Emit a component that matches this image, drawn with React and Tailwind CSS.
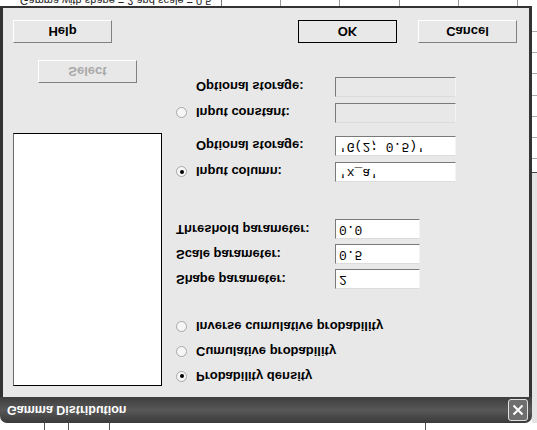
import React from "react";

const label = "text-[13px] font-bold text-black leading-none whitespace-nowrap";
const raised =
  "flex items-center justify-center bg-[#e8e8e8] border border-t-[#808080] border-r-[#808080] border-b-white border-l-white";
const sunken =
  "h-[20px] border border-b-[#7a7a7a] border-l-[#7a7a7a] border-t-[#dcdcdc] border-r-[#f4f4f4] flex items-center pl-[3px] font-['Liberation_Mono','Courier_New',monospace] text-[13px] text-black";

function Radio({ checked }) {
  return (
    <span className="flex h-[11px] w-[11px] shrink-0 items-center justify-center rounded-full border border-[#a8a8a8] bg-[#f6f6f6]">
      {checked && <span className="h-[4px] w-[4px] rounded-full bg-black" />}
    </span>
  );
}

function Field({ width, value, disabled }) {
  return (
    <div className={`${sunken} ${width} ${disabled ? "bg-[#e8e8e8]" : "bg-white"}`}>
      {value}
    </div>
  );
}

function RadioRow({ checked, text, h = "h-[25px]", children }) {
  return (
    <div className={`flex items-center ${h}`}>
      <Radio checked={checked} />
      <span className={`${label} ml-[9px] w-[139px]`}>{text}</span>
      {children}
    </div>
  );
}

function StorageRow({ value, disabled }) {
  return (
    <div className="flex h-[26px] items-center">
      <span className={`${label} ml-[20px] w-[139px]`}>Optional storage:</span>
      <Field width="w-[121px]" value={value} disabled={disabled} />
    </div>
  );
}

function ParamRow({ text, value }) {
  return (
    <div className="flex h-[25px] items-center">
      <span className={`${label} w-[159px]`}>{text}</span>
      <Field width="w-[85px]" value={value} />
    </div>
  );
}

export default function App() {
  return (
    <div className="h-[430px] w-[537px] overflow-hidden bg-white font-['Liberation_Sans',Arial,sans-serif] -scale-y-100">
      {/* worksheet strip behind the dialog */}
      <div className="flex h-[7px] w-full bg-white">
        <div className="w-[45px] border-r border-[#555]" />
        <div className="w-[24px] border-r border-[#555]" />
        <div className="w-[41px] border-r border-[#555]" />
        <div className="w-[316px] border-r border-[#555]" />
      </div>

      <div className="flex h-[417px]">
        {/* dialog */}
        <div className="flex w-[532px] flex-col">
          <div className="flex h-[26px] items-center rounded-t-[7px] bg-gradient-to-b from-[#3a3a3a] via-[#585858] to-[#3e3e3e] pl-[7px] pr-[4px]">
            <span className="text-[12.5px] font-bold text-white">Gamma Distribution</span>
            <div className="ml-auto flex h-[22px] w-[20px] items-center justify-center rounded-[3px] border border-[#e0e0e0] bg-[#6e6e6e]">
              <svg width="12" height="12" viewBox="0 0 12 12">
                <path d="M1.5 1.5 L10.5 10.5 M10.5 1.5 L1.5 10.5" stroke="white" strokeWidth="2" />
              </svg>
            </div>
          </div>

          <div className="flex h-[391px] flex-col border-x-[3px] border-b-2 border-[#333] bg-[#e8e8e8]">
            <div className="flex pt-[8px]">
              <div className="flex flex-col pl-[10px]">
                <div className="mt-[3px] h-[253px] w-[149px] border border-black border-l-[#6a6a6a] bg-white" />
                <div className={`${raised} ml-[25px] mt-[50px] h-[23px] w-[99px] text-[13px] font-bold text-[#a9a9a9]`}>
                  Select
                </div>
              </div>

              <div className="ml-[14px] flex flex-col">
                <RadioRow checked text="Probability density" />
                <RadioRow text="Cumulative probability" />
                <RadioRow text="Inverse cumulative probability" />

                <div className="mt-[22px]">
                  <ParamRow text="Shape parameter:" value="2" />
                  <ParamRow text="Scale parameter:" value="0.5" />
                  <ParamRow text="Threshold parameter:" value="0.0" />
                </div>

                <div className="mt-[32px]">
                  <RadioRow checked text="Input column:" h="h-[26px]">
                    <Field width="w-[121px]" value="'x_a'" />
                  </RadioRow>
                  <StorageRow value="'G(2; 0.5)'" />
                </div>

                <div className="mt-[7px]">
                  <RadioRow text="Input constant:" h="h-[26px]">
                    <Field width="w-[121px]" disabled />
                  </RadioRow>
                  <StorageRow disabled />
                </div>
              </div>
            </div>

            <div className="mt-[17px] flex pl-[10px]">
              <div className={`${raised} h-[23px] w-[99px] text-[13px] font-bold`}>Help</div>
              <div className={`${raised} ml-[186px] h-[23px] w-[99px] text-[13px] font-bold outline outline-1 outline-black -outline-offset-1`}>
                OK
              </div>
              <div className={`${raised} ml-[21px] h-[23px] w-[99px] text-[13px] font-bold`}>Cancel</div>
            </div>
          </div>
        </div>

        {/* worksheet column to the right */}
        <div className="flex w-[5px] flex-col">
          <div className="h-[250px] bg-[#e4e4e4]" />
          <div className="h-[14px] border-t border-[#444] bg-white" />
          <div className="h-[21px] border-t border-[#aaa] bg-white" />
          <div className="h-[21px] border-t border-[#aaa] bg-white" />
          <div className="h-[21px] border-t border-[#aaa] bg-white" />
          <div className="h-[22px] border-t border-[#aaa] bg-white" />
          <div className="h-[21px] border-t border-[#aaa] bg-white" />
          <div className="h-[21px] border-t border-[#aaa] bg-white" />
          <div className="flex-1 border-t border-[#aaa] bg-white" />
        </div>
      </div>

      <div className="flex h-[6px] items-start overflow-hidden bg-white">
        <div className="w-[222px] overflow-hidden border-r border-[#777] pl-[20px] text-[11px] leading-[11px] text-[#222] whitespace-nowrap">
          Gamma with shape = 2 and scale = 0.5
        </div>
        <div className="h-full w-[59px] border-r border-[#999]" />
        <div className="h-full w-[59px] border-r border-[#999]" />
        <div className="h-full w-[60px] border-r border-[#999]" />
        <div className="h-full w-[59px] border-r border-[#999]" />
        <div className="h-full w-[59px] border-r border-[#999]" />
      </div>
    </div>
  );
}
